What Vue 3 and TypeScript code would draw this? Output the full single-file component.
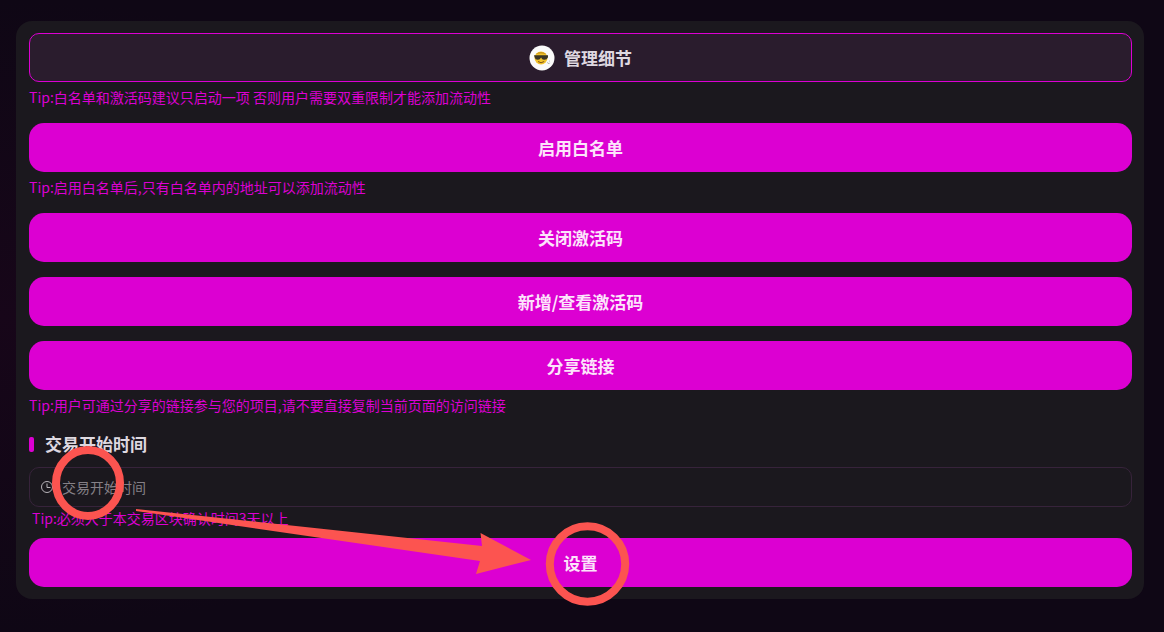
<script setup lang="ts">
import { ref } from 'vue'

const startTime = ref('')
</script>

<template>
  <main class="page">
    <section class="panel">
      <header class="title">
        <svg class="avatar" viewBox="0 0 26 26" aria-hidden="true">
          <circle cx="13" cy="13" r="12.5" fill="#fafafa" />
          <circle cx="12" cy="13" r="6.5" fill="#f2c32b" />
          <path d="M6.5 9.3Q12 4.8 17.5 9.3Q12 7.6 6.5 9.3Z" fill="#c9951a" />
          <path d="M5 10.3H19V12.2Q17.8 15 15 14.8Q13 14.5 12.1 12.4Q11 14.5 9 14.8Q6.2 15 5.6 12.2Z" fill="#3a3524" />
          <path d="M9 16.5Q12 19 15.2 16.5" fill="none" stroke="#80551a" stroke-width="1" />
          <path d="M18.4 17.2L19.7 19L20.6 17.8M20.5 15.7V16.5" fill="none" stroke="#a4aaa0" stroke-width="0.8" />
        </svg>
        <h1>管理细节</h1>
      </header>
      <p class="tip">Tip:白名单和激活码建议只启动一项 否则用户需要双重限制才能添加流动性</p>
      <button type="button">启用白名单</button>
      <p class="tip">Tip:启用白名单后,只有白名单内的地址可以添加流动性</p>
      <div class="stack">
        <button type="button">关闭激活码</button>
        <button type="button">新增/查看激活码</button>
        <button type="button">分享链接</button>
      </div>
      <p class="tip">Tip:用户可通过分享的链接参与您的项目,请不要直接复制当前页面的访问链接</p>
      <h2><label for="start-time">交易开始时间</label></h2>
      <div class="field">
        <svg viewBox="0 0 14 14" aria-hidden="true">
          <circle cx="7" cy="7" r="5.5" />
          <path d="M7 3.5V7.5H10.5" />
        </svg>
        <input id="start-time" v-model="startTime" type="text" placeholder="交易开始时间" />
      </div>
      <p class="tip field-tip">Tip:必须大于本交易区块确认时间3天以上</p>
      <button type="button">设置</button>
    </section>
    <svg class="marks" width="640" height="632" viewBox="0 0 640 632" aria-hidden="true">
      <ellipse cx="88" cy="483" rx="32" ry="33" />
      <circle cx="587.5" cy="564" r="37.7" />
      <path d="M136 509L482 546L480.5 533L531 560L476 574L480 561L136 511Z" />
    </svg>
  </main>
</template>

<style>
body {
  margin: 0;
  background: #0f0715;
}
</style>

<style scoped>
.page {
  position: relative;
  box-sizing: border-box;
  min-height: 100vh;
  padding: 21px 20px 33px 16px;
  overflow: hidden;
  background: radial-gradient(ellipse 50% 50% at 0 50%, #170619, #0f0715);
  color: #ded8e0;
  font-family: "Noto Sans CJK SC", sans-serif;
  font-size: 14px;
}

.panel {
  padding: 12px 12px 12px 13px;
  border-radius: 16px;
  background: #1b181e;
}

.title {
  display: flex;
  align-items: center;
  justify-content: center;
  gap: 9px;
  box-sizing: border-box;
  height: 49px;
  border: 1px solid #dc00d2;
  border-radius: 10px;
  background: #2a1c2d;
}

.avatar {
  width: 26px;
  height: 26px;
}

h1,
h2 {
  margin: 0;
  font-size: 17px;
  font-weight: 700;
  line-height: 26px;
}

.tip {
  margin: 4px 0 15px;
  color: #dc00d2;
  line-height: 22px;
}

button {
  display: block;
  width: 100%;
  height: 49px;
  padding: 0;
  border: 0;
  border-radius: 15px;
  background: #dc00d2;
  color: #fce4fb;
  font-family: inherit;
  font-size: 17px;
  font-weight: 600;
  line-height: 26px;
  cursor: pointer;
}

.stack {
  display: grid;
  gap: 15px;
}

h2 {
  display: flex;
  align-items: center;
  gap: 11px;
  margin-bottom: 10px;
}

h2::before {
  width: 5px;
  height: 15px;
  border-radius: 2px;
  background: #dc00d2;
  content: "";
}

.field {
  display: flex;
  align-items: center;
  gap: 8px;
  box-sizing: border-box;
  height: 40px;
  padding: 0 10px;
  border: 1px solid #37233b;
  border-radius: 10px;
}

.field svg {
  width: 14px;
  height: 14px;
  fill: none;
  stroke: #b8b4ba;
}

input {
  flex: 1;
  min-width: 0;
  padding: 0;
  border: 0;
  outline: 0;
  background: transparent;
  color: inherit;
  font: inherit;
}

input::placeholder {
  color: #858087;
  opacity: 1;
}

.field-tip {
  margin: 0 3px 9px;
}

.marks {
  position: absolute;
  top: 0;
  left: 0;
  pointer-events: none;
  fill: none;
}

.marks ellipse,
.marks circle {
  stroke: #fc5450;
  stroke-width: 8px;
}

.marks path {
  fill: #fc5450;
}
</style>
